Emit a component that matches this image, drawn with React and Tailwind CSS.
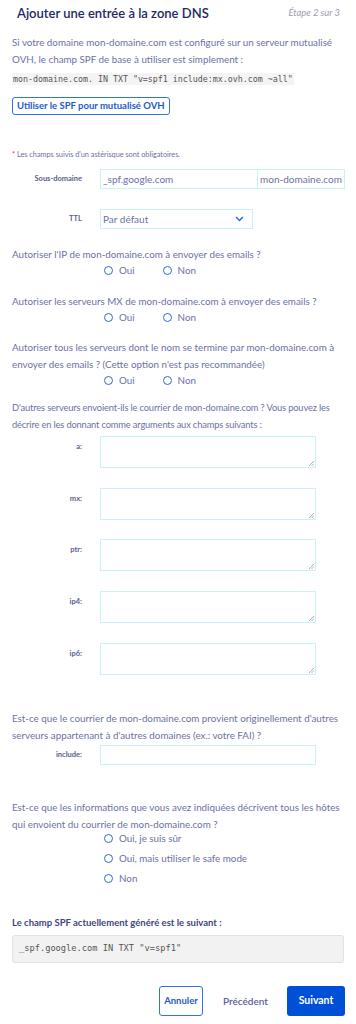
const txt = "text-[#6d70a6]";
const q = `mx-[12px] text-[9.8px] leading-[17px] ${txt}`;
const lbl = "w-[82px] text-right text-[7.5px] font-bold text-[#5a5d93]";

function Radio({ label }) {
  return (
    <div className="flex items-center gap-[6px]">
      <span className="w-[9px] h-[9px] rounded-full border-[1.5px] border-[#2b6bdc] box-border" />
      <span className={`text-[9.8px] ${txt}`}>{label}</span>
    </div>
  );
}

function YesNo() {
  return (
    <div className="flex pl-[104px] gap-[28px] h-[14px] items-center">
      <Radio label="Oui" />
      <Radio label="Non" />
    </div>
  );
}

function Area({ label, mt }) {
  return (
    <div className={`flex ${mt}`}>
      <div className={`${lbl} pt-[5px]`}>{label}</div>
      <div className="ml-[18px] w-[216px] h-[32px] border border-[#c9f0fb] relative">
        <svg className="absolute right-[1px] bottom-[1px]" width="6" height="6" viewBox="0 0 6 6">
          <path d="M1 6 L6 1 M3.5 6 L6 3.5" stroke="#9a9a9a" strokeWidth="0.8" />
        </svg>
      </div>
    </div>
  );
}

export default function App() {
  return (
    <div className="w-[356px] bg-white font-['Lato',sans-serif] pb-[8px]">
      <div className="flex items-center justify-between pl-[17px] pr-[16px] pt-[4px] h-[22px]">
        <h1 className="text-[13px] leading-[18px] font-semibold text-[#23295c]">Ajouter une entrée à la zone DNS</h1>
        <span className="text-[9.4px] italic text-[#9a9cae]">Étape 2 sur 3</span>
      </div>

      <p className={`mx-[12px] mt-[12px] text-[9.8px] leading-[17px] ${txt}`}>
        Si votre domaine mon-domaine.com est configuré sur un serveur mutualisé OVH, le champ SPF de base à utiliser est simplement :
      </p>
      <div className="mx-[12px] mt-[5px] h-[12px] leading-[12px] w-fit bg-[#f5f3f3] px-[1px] font-['DejaVu_Sans_Mono',monospace] text-[8.3px] text-[#555]">
        mon-domaine.com. IN TXT "v=spf1 include:mx.ovh.com ~all"
      </div>
      <div className="flex px-[12px] mt-[12px]">
        <button className="h-[18px] px-[4px] border border-[#2f74e2] rounded-[3px] text-[9.5px] font-bold text-[#1c5bcc] leading-none">
          Utiliser le SPF pour mutualisé OVH
        </button>
      </div>

      <p className="mx-[12px] mt-[35px] h-[10px] leading-[10px] text-[7.3px] text-[#6d70a6]">
        <span className="text-[#e03b3b]">* </span>Les champs suivis d'un astérisque sont obligatoires.
      </p>

      <div className="flex items-center mt-[9px]">
        <div className={lbl}>Sous-domaine</div>
        <div className="ml-[18px] flex h-[20px] border border-[#c9f0fb]">
          <div className="w-[157px] border-r border-[#c9f0fb] px-[2px] flex items-center text-[10px] text-[#6d70a6]">_spf.google.com</div>
          <div className="w-[86px] px-[2px] flex items-center text-[10px] text-[#6d70a6]">mon-domaine.com</div>
        </div>
      </div>

      <div className="flex items-center mt-[20px]">
        <div className={lbl}>TTL</div>
        <div className="ml-[18px] w-[153px] h-[20px] border border-[#c9f0fb] flex items-center justify-between px-[2px]">
          <span className="text-[10px] text-[#6d70a6]">Par défaut</span>
          <svg width="9" height="6" viewBox="0 0 9 6" className="mr-[6px]">
            <path d="M1 1 L4.5 4.5 L8 1" fill="none" stroke="#2b6bdc" strokeWidth="1.5" />
          </svg>
        </div>
      </div>

      <p className={`${q} mt-[17px]`}>Autoriser l'IP de mon-domaine.com à envoyer des emails ?</p>
      <YesNo />

      <p className={`${q} mt-[16px]`}>Autoriser les serveurs MX de mon-domaine.com à envoyer des emails ?</p>
      <YesNo />

      <p className={`${q} mt-[15px]`}>
        Autoriser tous les serveurs dont le nom se termine par mon-domaine.com à envoyer des emails ? (Cette option n'est pas recommandée)
      </p>
      <YesNo />

      <p className={`mx-[12px] mt-[12px] text-[9.3px] tracking-[-0.15px] leading-[17px] ${txt}`}>
        D'autres serveurs envoient-ils le courrier de mon-domaine.com ? Vous pouvez les décrire en les donnant comme arguments aux champs suivants :
      </p>

      <Area label="a:" mt="mt-[3px]" />
      <Area label="mx:" mt="mt-[20px]" />
      <Area label="ptr:" mt="mt-[19px]" />
      <Area label="ip4:" mt="mt-[20px]" />
      <Area label="ip6:" mt="mt-[20px]" />

      <p className={`${q} mt-[35px]`}>
        Est-ce que le courrier de mon-domaine.com provient originellement d'autres serveurs appartenant à d'autres domaines (ex.: votre FAI) ?
      </p>
      <div className="flex items-center mt-[1px]">
        <div className={lbl}>include:</div>
        <div className="ml-[18px] w-[216px] h-[20px] border border-[#c9f0fb]" />
      </div>

      <p className={`${q} mt-[34px]`}>
        Est-ce que les informations que vous avez indiquées décrivent tous les hôtes qui envoient du courrier de mon-domaine.com ?
      </p>
      <div className="pl-[104px] flex flex-col gap-[4px] mt-[-3px]">
        <div className="h-[16px] flex items-center"><Radio label="Oui, je suis sûr" /></div>
        <div className="h-[16px] flex items-center"><Radio label="Oui, mais utiliser le safe mode" /></div>
        <div className="h-[16px] flex items-center"><Radio label="Non" /></div>
      </div>

      <p className="mx-[12px] mt-[30px] h-[14px] leading-[14px] text-[9.5px] font-bold text-[#3f4484]">Le champ SPF actuellement généré est le suivant :</p>
      <div className="mx-[12px] mt-[5px] h-[28px] bg-[#f2f2f2] border border-[#e2e2e2] rounded-[3px] flex items-center px-[6px] font-['DejaVu_Sans_Mono',monospace] text-[8.7px] text-[#555]">
        _spf.google.com IN TXT "v=spf1"
      </div>

      <div className="flex justify-end items-center mt-[23px] mr-[11px]">
        <button className="w-[44px] h-[30px] border border-[#2f74e2] rounded-[3px] text-[9.5px] font-bold text-[#1c5bcc]">Annuler</button>
        <span className="ml-[20px] text-[10px] font-semibold text-[#5a5e96]">Précédent</span>
        <button className="ml-[19px] w-[58px] h-[30px] bg-[#0050d7] rounded-[3px] text-[10.5px] font-bold text-white">Suivant</button>
      </div>
    </div>
  );
}
